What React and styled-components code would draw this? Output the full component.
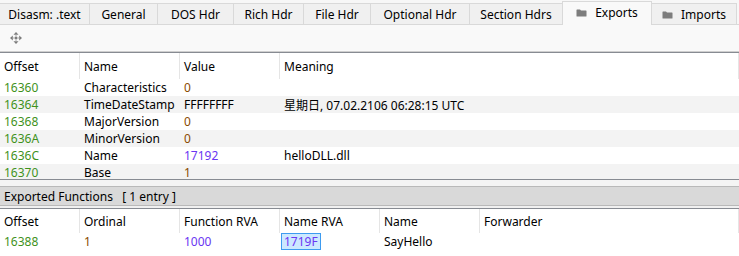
import React from "react";
import styled, { createGlobalStyle, css } from "styled-components";

const GlobalStyle = createGlobalStyle`
  html, body { margin: 0; padding: 0; background: #ffffff; }
  body {
    font-family: "Noto Sans", "Noto Sans CJK TC", sans-serif;
    font-size: 12px;
    color: #000;
  }
`;

const Page = styled.div`
  width: 739px;
  height: 256px;
  overflow: hidden;
  background: #ffffff;
  display: flex;
  flex-direction: column;
`;

const TabBar = styled.div`
  height: 24px;
  display: flex;
  align-items: flex-end;
  background: #f7f7f7;
  border-bottom: 1px solid #d9d9d9;
`;

const Tab = styled.div`
  box-sizing: border-box;
  width: ${(p) => p.$w}px;
  height: 21px;
  display: flex;
  align-items: center;
  justify-content: center;
  gap: 8px;
  background: #f0f0f0;
  border: 1px solid #d9d9d9;
  border-bottom: none;
  margin-left: -1px;
  padding-top: 2px;
  white-space: nowrap;
  line-height: 1;
  color: #000;
  &:first-child { margin-left: 0; border-left: none; }
  ${(p) =>
    p.$active &&
    css`
      height: 24px;
      margin-bottom: -1px;
      background: #f9f9f9;
      position: relative;
      z-index: 1;
      padding-top: 0;
      padding-bottom: 1px;
    `}
`;

const Toolbar = styled.div`
  height: 26px;
  background: #f9f9f9;
  display: flex;
  align-items: center;
  padding-left: 10px;
  border-bottom: 1px solid #cfcfcf;
`;

const TopPane = styled.div`
  height: 126px;
  overflow: hidden;
  border-top: 1px solid #878b92;
  border-bottom: 1px solid #878b92;
  background: #fff;
`;

const Grid = styled.div`
  display: grid;
  grid-template-columns: ${(p) => p.$cols};
`;

const HeadCell = styled.div`
  height: ${(p) => p.$h}px;
  display: flex;
  align-items: center;
  padding-left: 4px;
  border-right: 1px solid #e5e5e5;
  white-space: nowrap;
  color: #000;
  &:last-child { border-right: none; }
`;

const Cell = styled.div`
  height: 17px;
  display: flex;
  align-items: center;
  padding-left: 4px;
  white-space: nowrap;
  background: ${(p) => (p.$alt ? "#f3f3f3" : "#ffffff")};
  color: ${(p) => p.$color || "#000"};
`;

const Splitter = styled.div`
  height: 6px;
  background: #f4f4f4;
`;

const SectionLabel = styled.div`
  height: 18px;
  background: #d9d9d9;
  border-top: 1px solid #b9b9b9;
  border-bottom: 1px solid #b9b9b9;
  display: flex;
  align-items: center;
  padding-left: 4px;
  white-space: nowrap;
  color: #000;
`;

const Gap = styled.div`
  height: 2px;
  background: #f0f0f0;
`;

const BottomPane = styled.div`
  flex: 1;
  border-top: 1px solid #878b92;
  background: #fff;
`;

const Selected = styled.span`
  display: inline-flex;
  align-items: center;
  box-sizing: border-box;
  height: 17px;
  margin-left: -3px;
  padding: 0 2px;
  background: #cce8ff;
  border: 1px solid #3d9bf0;
`;

const C = {
  offset: "#3f921c",
  num: "#6a36f2",
  dec: "#8a4a00",
};

const FolderIcon = () => (
  <svg width="11" height="8" viewBox="0 0 11 8">
    <path d="M0.5 1 Q0.5 0.5 1 0.5 H4 L5 1.5 H10 Q10.5 1.5 10.5 2 V7 Q10.5 7.5 10 7.5 H1 Q0.5 7.5 0.5 7 Z" fill="#7d7d7d" />
  </svg>
);

const MoveIcon = () => (
  <svg width="12" height="12" viewBox="0 0 12 12">
    <g fill="#7c7c7c">
      <path d="M6 0 L8.5 2.8 H3.5 Z" />
      <path d="M6 12 L8.5 9.2 H3.5 Z" />
      <path d="M0 6 L2.8 3.5 V8.5 Z" />
      <path d="M12 6 L9.2 3.5 V8.5 Z" />
      <rect x="4.8" y="4.8" width="2.4" height="2.4" />
    </g>
    <g stroke="#a8a8a8" strokeWidth="1">
      <path d="M6 3 V4.8 M6 7.2 V9 M3 6 H4.8 M7.2 6 H9" />
    </g>
  </svg>
);

const tabs = [
  { label: "Disasm: .text", w: 90 },
  { label: "General", w: 69 },
  { label: "DOS Hdr", w: 77 },
  { label: "Rich Hdr", w: 71 },
  { label: "File Hdr", w: 68 },
  { label: "Optional Hdr", w: 100 },
  { label: "Section Hdrs", w: 94 },
  { label: "Exports", w: 90, icon: true, active: true },
  { label: "Imports", w: 86, icon: true },
];

const topRows = [
  ["16360", "Characteristics", ["0", C.dec], ""],
  ["16364", "TimeDateStamp", ["FFFFFFFF", "#000"], "星期日, 07.02.2106 06:28:15 UTC"],
  ["16368", "MajorVersion", ["0", C.dec], ""],
  ["1636A", "MinorVersion", ["0", C.dec], ""],
  ["1636C", "Name", ["17192", C.num], "helloDLL.dll"],
  ["16370", "Base", ["1", C.dec], ""],
];

export default function App() {
  return (
    <Page>
      <GlobalStyle />
      <TabBar>
        {tabs.map((t) => (
          <Tab key={t.label} $w={t.w} $active={t.active}>
            {t.icon && <FolderIcon />}
            <span>{t.label}</span>
          </Tab>
        ))}
      </TabBar>
      <Toolbar>
        <MoveIcon />
      </Toolbar>
      <TopPane>
        <Grid $cols="80px 100px 100px 1fr">
          {["Offset", "Name", "Value", "Meaning"].map((h) => (
            <HeadCell key={h} $h={26}>{h}</HeadCell>
          ))}
          {topRows.map((r, i) => {
            const alt = i % 2 === 1;
            return (
              <React.Fragment key={r[0]}>
                <Cell $alt={alt} $color={C.offset}>{r[0]}</Cell>
                <Cell $alt={alt}>{r[1]}</Cell>
                <Cell $alt={alt} $color={r[2][1]}>{r[2][0]}</Cell>
                <Cell $alt={alt}>{r[3]}</Cell>
              </React.Fragment>
            );
          })}
        </Grid>
      </TopPane>
      <Splitter />
      <SectionLabel>Exported Functions&nbsp;&nbsp;&nbsp;[ 1 entry ]</SectionLabel>
      <Gap />
      <BottomPane>
        <Grid $cols="80px 100px 100px 100px 100px 1fr">
          {["Offset", "Ordinal", "Function RVA", "Name RVA", "Name", "Forwarder"].map((h) => (
            <HeadCell key={h} $h={24}>{h}</HeadCell>
          ))}
          <Cell $color={C.offset}>16388</Cell>
          <Cell $color={C.dec}>1</Cell>
          <Cell $color={C.num}>1000</Cell>
          <Cell $color={C.num}>
            <Selected>1719F</Selected>
          </Cell>
          <Cell>SayHello</Cell>
          <Cell></Cell>
        </Grid>
      </BottomPane>
    </Page>
  );
}
